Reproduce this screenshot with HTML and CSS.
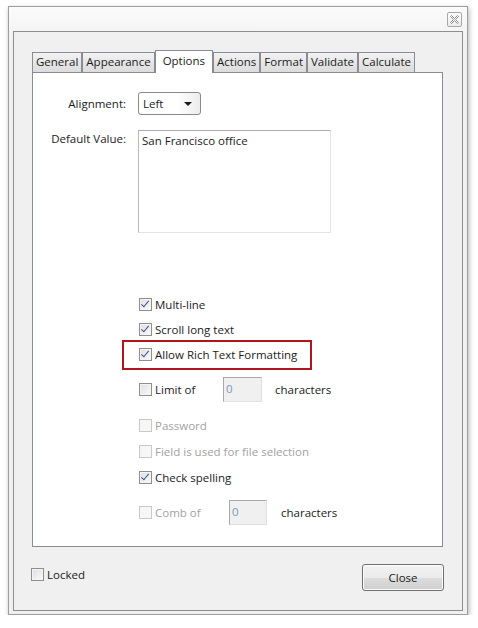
FILE: index.html
```html
<!DOCTYPE html>
<html lang="en">
<head>
    <meta charset="UTF-8"/>
    <title>Text Field Properties</title>
    <link rel="stylesheet" href="styles.css">
</head>
<body>
<div class="window">
    <div class="titlebar">
        <button class="x-btn" aria-label="Close">
            <svg width="9" height="9" viewBox="0 0 9 9">
                <polygon points="0.5,1.5 1.5,0.5 4.5,3.5 7.5,0.5 8.5,1.5 5.5,4.5 8.5,7.5 7.5,8.5 4.5,5.5 1.5,8.5 0.5,7.5 3.5,4.5"
                         fill="#fff" stroke="#8c8c8c" stroke-width="1"/>
            </svg>
        </button>
    </div>

    <div class="frame">
        <div class="tabs">
            <div class="tab">General</div>
            <div class="tab">Appearance</div>
            <div class="tab active">Options</div>
            <div class="tab">Actions</div>
            <div class="tab">Format</div>
            <div class="tab">Validate</div>
            <div class="tab">Calculate</div>
        </div>

        <div class="panel">
            <div class="field-row">
                <span class="field-label">Alignment:</span>
                <div class="select">Left<span class="arrow"></span></div>
            </div>
            <div class="field-row top">
                <span class="field-label">Default Value:</span>
                <div class="textarea">San Francisco office</div>
            </div>

            <ul class="options">
                <li class="opt"><span class="check on"></span>Multi-line</li>
                <li class="opt"><span class="check on"></span>Scroll long text</li>
                <li class="opt highlight"><span class="check on"></span>Allow Rich Text Formatting</li>
                <li class="opt with-field">
                    <span class="check"></span>
                    <span class="opt-label limit">Limit of</span>
                    <span class="num">0</span>
                    <span class="unit">characters</span>
                </li>
                <li class="opt disabled"><span class="check"></span>Password</li>
                <li class="opt disabled"><span class="check"></span>Field is used for file selection</li>
                <li class="opt"><span class="check on"></span>Check spelling</li>
                <li class="opt with-field">
                    <span class="check off"></span>
                    <span class="opt-label comb">Comb of</span>
                    <span class="num">0</span>
                    <span class="unit">characters</span>
                </li>
            </ul>
        </div>

        <div class="footer">
            <label class="opt locked"><span class="check"></span>Locked</label>
            <button class="close">Close</button>
        </div>
    </div>
</div>
</body>
</html>
```

FILE: styles.css
```css
:root {
    --text: #1b1b1b;
    --muted: #a2a2a2;
    --tab-border: #898c95;
    --face: #f0f0f0;
}

html, body {
    margin: 0;
    padding: 0;
    background: #fff;
}

body {
    font-family: "Open Sans", "Noto Sans", Arial, sans-serif;
    font-size: 11.5px;
    color: var(--text);
}

.window {
    box-sizing: border-box;
    width: 460px;
    height: 609px;
    margin: 6px 0 0 8px;
    border: 1px solid #9d9d9d;
    background: linear-gradient(#fbfbfb, #f0f0f0 40px);
    box-shadow: 1px 2px 5px rgba(0, 0, 0, 0.3);
    display: flex;
    flex-direction: column;
}

.titlebar {
    height: 24px;
    display: flex;
    justify-content: flex-end;
    align-items: flex-start;
}

.x-btn {
    width: 15px;
    height: 15px;
    margin: 5px 5px 0 0;
    padding: 0;
    border: 1px solid #a8a8a8;
    border-radius: 2px;
    background: linear-gradient(#fdfdfd, #ececec);
    display: flex;
    align-items: center;
    justify-content: center;
}

.frame {
    box-sizing: border-box;
    height: 580px;
    margin: 0 4px;
    border: 1px solid #8e8e8e;
    background: var(--face);
    padding: 18px 19px 0 18px;
    display: flex;
    flex-direction: column;
}

/* tab strip */
.tabs {
    display: flex;
    align-items: flex-end;
    height: 22px;
    position: relative;
    z-index: 1;
}

.tab {
    box-sizing: border-box;
    height: 20px;
    line-height: 18px;
    padding: 0 3px;
    border: 1px solid var(--tab-border);
    border-bottom: none;
    background: linear-gradient(#f3f3f3, #e6e6e6 50%, #dcdcdc);
    white-space: nowrap;
}

.tab.active {
    height: 23px;
    margin-bottom: -1px;
    padding: 0 7px;
    line-height: 20px;
    background: #fff;
}

.panel {
    box-sizing: border-box;
    height: 475px;
    border: 1px solid var(--tab-border);
    background: #fff;
    padding: 19px 0 0 0;
}

.field-row {
    display: flex;
    align-items: center;
    gap: 12px;
    margin-bottom: 15px;
}

.field-row.top {
    align-items: flex-start;
}

.field-label {
    width: 93px;
    text-align: right;
}

.field-row.top .field-label {
    padding-top: 1px;
}

.select {
    box-sizing: border-box;
    width: 63px;
    height: 23px;
    padding: 0 0 0 4px;
    border: 1px solid #8a8a8a;
    border-radius: 3px;
    background: linear-gradient(to right, #fff 62%, #ececec);
    display: flex;
    align-items: center;
    justify-content: space-between;
}

.arrow {
    width: 0;
    height: 0;
    margin-right: 8px;
    border-left: 4px solid transparent;
    border-right: 4px solid transparent;
    border-top: 4px solid #1b1b1b;
}

.textarea {
    box-sizing: border-box;
    width: 193px;
    height: 103px;
    padding: 2px 3px;
    border: 1px solid #e2e3ea;
    border-top-color: #abadb3;
    border-left-color: #b8bac0;
}

/* check list */
.options {
    list-style: none;
    margin: 59px 0 0 106px;
    padding: 0;
}

.opt {
    display: flex;
    align-items: center;
    width: fit-content;
    height: 25px;
    white-space: nowrap;
}

.with-field ~ .opt {
    height: 26px;
}

.opt.with-field {
    height: 45px;
}

.opt.disabled,
.check.off + .opt-label {
    color: var(--muted);
}

.check {
    box-sizing: border-box;
    width: 13px;
    height: 13px;
    margin-right: 3px;
    border: 1px solid #8f8f8f;
    background: linear-gradient(135deg, #dedede, #fbfbfb);
    box-shadow: inset 0 0 0 1px #f4f4f4;
    flex-shrink: 0;
    position: relative;
}

.check.on::after {
    content: "";
    position: absolute;
    left: 3px;
    top: 0;
    width: 3px;
    height: 7px;
    border: solid #3d5590;
    border-width: 0 1.5px 1.5px 0;
    transform: rotate(40deg);
}

.opt.disabled .check,
.check.off {
    border-color: #c9c9c9;
    background: #f6f6f6;
    box-shadow: none;
}

.highlight {
    position: relative;
}

.highlight::before {
    content: "";
    position: absolute;
    left: -17px;
    right: -15px;
    top: -2px;
    bottom: -3px;
    border: 2px solid #b0141c;
}

.opt-label.limit {
    width: 68px;
}

.opt-label.comb {
    width: 74px;
}

.num {
    box-sizing: border-box;
    width: 39px;
    height: 25px;
    padding: 2px 2px;
    border: 1px solid #e0e0e0;
    border-top-color: #a9a9a9;
    border-left-color: #a9a9a9;
    background: #f0f0f0;
    color: #8096b8;
    line-height: 18px;
}

.unit {
    margin-left: 13px;
}

.comb ~ .num {
    width: 38px;
}

.comb ~ .unit {
    margin-left: 14px;
}

/* footer */
.footer {
    display: flex;
    justify-content: space-between;
    align-items: flex-start;
    padding-top: 17px;
}

.locked {
    margin: 2px 0 0 -1px;
    height: 16px;
}

.close {
    box-sizing: border-box;
    width: 82px;
    height: 27px;
    margin-right: -1px;
    border: 1px solid #707070;
    border-radius: 3px;
    background: linear-gradient(#f2f2f2, #ebebeb 50%, #dddddd 51%, #cfcfcf);
    font: inherit;
    color: var(--text);
    box-shadow: inset 0 0 0 1px #fcfcfc;
}
```
